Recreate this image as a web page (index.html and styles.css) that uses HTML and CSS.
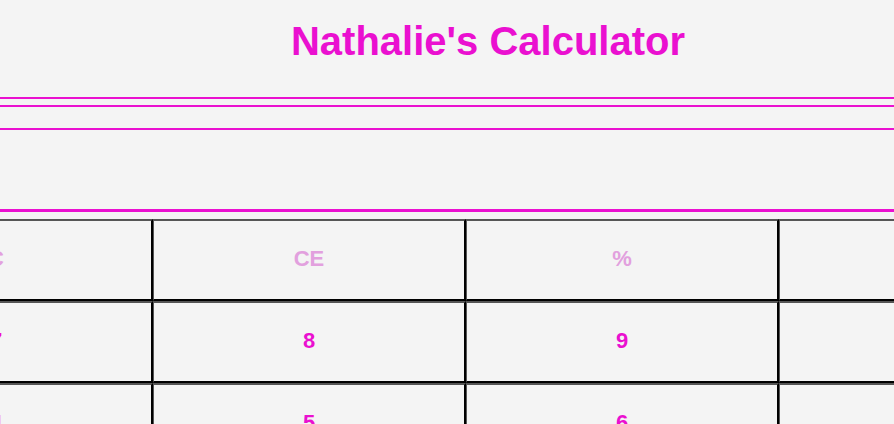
FILE: index.html
```html
<!DOCTYPE html>
<html lang="en">
<head>
<meta charset="utf-8">
<title>Nathalie's Calculator</title>
<link rel="stylesheet" href="styles.css">
</head>
<body>
<div class="page">
  <header class="header">
    <h1 class="title">Nathalie's Calculator</h1>
  </header>
  <div class="display">
    <div class="previous"></div>
    <div class="current"></div>
  </div>
  <div class="keys">
    <button class="key key-fn">C</button>
    <button class="key key-fn">CE</button>
    <button class="key key-fn">%</button>
    <button class="key key-fn">÷</button>
    <button class="key">7</button>
    <button class="key">8</button>
    <button class="key">9</button>
    <button class="key">×</button>
    <button class="key">4</button>
    <button class="key">5</button>
    <button class="key">6</button>
    <button class="key">−</button>
    <button class="key">1</button>
    <button class="key">2</button>
    <button class="key">3</button>
    <button class="key">+</button>
    <button class="key">0</button>
    <button class="key">.</button>
    <button class="key">=</button>
    <button class="key">±</button>
  </div>
</div>
</body>
</html>
```
FILE: styles.css
```css
html, body {
  margin: 0;
  padding: 0;
  background: #f4f4f4;
}

body {
  font-family: "Liberation Sans", Arial, sans-serif;
  color: #ea10d0;
}

.page {
  overflow-x: hidden;
}

.header {
  padding: 18px 0 33px 82px;
  border-bottom: 2px solid #ea10d0;
  margin-bottom: 6px;
}

.title {
  margin: 0;
  font-size: 40px;
  line-height: 46px;
  font-weight: bold;
  text-align: center;
  color: #ea10d0;
}

.display {
  border-top: 2px solid #ea10d0;
  border-bottom: 3px solid #ea10d0;
  margin-bottom: 7px;
}

.previous {
  height: 21px;
  border-bottom: 2px solid #ea10d0;
}

.current {
  height: 79px;
}

.keys {
  display: grid;
  grid-template-columns: repeat(4, 313px);
  width: 1252px;
  margin-left: -160px;
}

.key {
  box-sizing: border-box;
  height: 82px;
  margin: 0;
  padding: 0 0 3px;
  background: #f4f4f4;
  border-style: solid;
  border-width: 2px 2px 2px 1px;
  border-color: #555 #000 #000 #555;
  font-family: "Liberation Sans", Arial, sans-serif;
  font-size: 22px;
  font-weight: bold;
  color: #ea10d0;
}

.key-fn {
  color: #e2a0de;
}
```
